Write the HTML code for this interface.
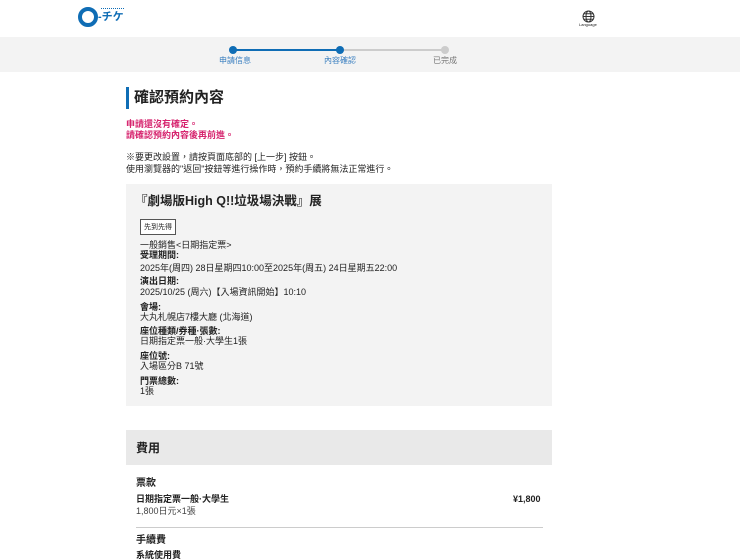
<!DOCTYPE html>
<html><head><meta charset="utf-8"><style>
*{margin:0;padding:0;box-sizing:border-box}
body{width:740px;height:554px;overflow:hidden;background:#fff;font-family:"Liberation Sans","Noto Sans CJK TC",sans-serif;color:#222;position:relative}
.a{position:absolute;white-space:nowrap;line-height:1}
.b{font-weight:bold}
.s{font-size:9px}
</style></head><body>
<!-- header -->
<div class="a" style="left:78px;top:7px;width:20px;height:20px;border:4.5px solid #0f6db5;border-radius:50%"></div>
<div class="a" style="left:98px;top:12px;font-size:11px;color:#0f6db5;font-weight:bold">-チケ</div>
<div class="a" style="left:101px;top:8px;width:23px;height:2px;border-top:1px dotted #0f6db5"></div>
<svg class="a" style="left:582px;top:10px" width="13" height="13" viewBox="0 0 13 13"><g fill="none" stroke="#333" stroke-width="1"><circle cx="6.5" cy="6.5" r="5.5"/><ellipse cx="6.5" cy="6.5" rx="2.5" ry="5.5"/><path d="M1 6.5h11M2 3.8h9M2 9.2h9"/></g></svg>
<div class="a" style="left:579px;top:23px;font-size:4px">Language</div>
<!-- progress -->
<div class="a" style="left:0;top:37px;width:740px;height:35px;background:#f3f3f3"></div>
<div class="a" style="left:233px;top:49px;width:107px;height:2px;background:#0f6db5"></div>
<div class="a" style="left:340px;top:49px;width:105px;height:2px;background:#ccc"></div>
<div class="a" style="left:229px;top:46px;width:8px;height:8px;border-radius:50%;background:#0f6db5"></div>
<div class="a" style="left:336px;top:46px;width:8px;height:8px;border-radius:50%;background:#0f6db5"></div>
<div class="a" style="left:441px;top:46px;width:8px;height:8px;border-radius:50%;background:#ccc"></div>
<div class="a" style="left:219px;top:57px;font-size:8px;color:#3a7fc0">申請信息</div>
<div class="a" style="left:324px;top:57px;font-size:8px;color:#3a7fc0">內容確認</div>
<div class="a" style="left:433px;top:57px;font-size:8px;color:#777">已完成</div>
<!-- title -->
<div class="a" style="left:126px;top:87px;width:3px;height:22px;background:#0f6db5"></div>
<div class="a b" style="left:134px;top:90px;font-size:15px">確認預約內容</div>
<div class="a b s" style="left:126px;top:120px;color:#d6246e">申請還沒有確定。</div>
<div class="a b s" style="left:126px;top:131px;color:#d6246e">請確認預約內容後再前進。</div>
<div class="a s" style="left:126px;top:153px">※要更改設置，請按頁面底部的 [上一步] 按鈕。</div>
<div class="a s" style="left:126px;top:165px">使用瀏覽器的"返回"按鈕等進行操作時，預約手續將無法正常進行。</div>
<!-- box -->
<div class="a" style="left:126px;top:184px;width:426px;height:222px;background:#f3f3f3"></div>
<div class="a b" style="left:135px;top:195px;font-size:12.5px">『劇場版High Q!!垃圾場決戰』展</div>
<div class="a" style="left:140px;top:219px;width:36px;height:16px;border:1px solid #555;background:#fff;font-size:7px;padding:4px 0 0 3px">先到先得</div>
<div class="a s" style="left:140px;top:241px">一般銷售&lt;日期指定票&gt;</div>
<div class="a b s" style="left:140px;top:251px">受理期間:</div>
<div class="a s" style="left:140px;top:264px">2025年(周四) 28日星期四10:00至2025年(周五) 24日星期五22:00</div>
<div class="a b s" style="left:140px;top:277px">演出日期:</div>
<div class="a s" style="left:140px;top:288px">2025/10/25 (周六)【入場資訊開始】10:10</div>
<div class="a b s" style="left:140px;top:303px">會場:</div>
<div class="a s" style="left:140px;top:313px">大丸札幌店7樓大廳 (北海道)</div>
<div class="a b s" style="left:140px;top:327px">座位種類/券種·張數:</div>
<div class="a s" style="left:140px;top:337px">日期指定票一般·大學生1張</div>
<div class="a b s" style="left:140px;top:352px">座位號:</div>
<div class="a s" style="left:140px;top:362px">入場區分B 71號</div>
<div class="a b s" style="left:140px;top:377px">門票總數:</div>
<div class="a s" style="left:140px;top:387px">1張</div>
<!-- fee -->
<div class="a" style="left:126px;top:430px;width:426px;height:35px;background:#e9e9e9"></div>
<div class="a b" style="left:136px;top:442px;font-size:12px">費用</div>
<div class="a b" style="left:136px;top:479px;font-size:10px">票款</div>
<div class="a b s" style="left:136px;top:495px">日期指定票一般·大學生</div>
<div class="a b s" style="left:513px;top:495px">¥1,800</div>
<div class="a s" style="left:136px;top:507px;color:#444">1,800日元×1張</div>
<div class="a" style="left:136px;top:527px;width:407px;height:1px;background:#ccc"></div>
<div class="a b" style="left:136px;top:536px;font-size:10px">手續費</div>
<div class="a b s" style="left:136px;top:551px">系統使用費</div>
</body></html>
